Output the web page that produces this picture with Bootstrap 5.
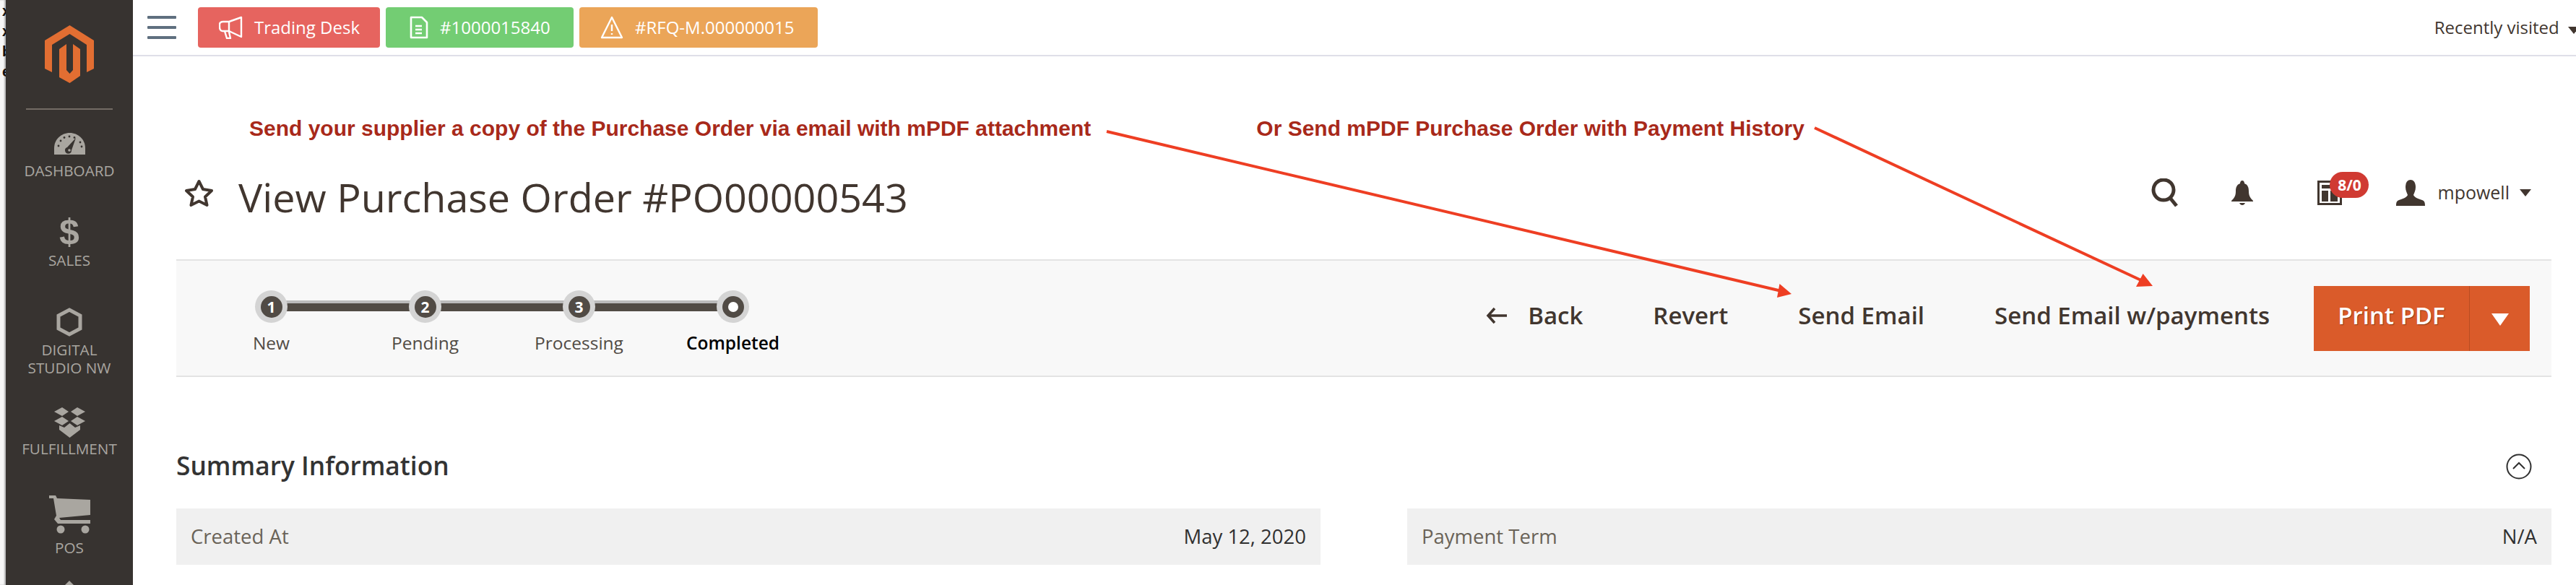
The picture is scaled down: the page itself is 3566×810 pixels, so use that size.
<!DOCTYPE html>
<html lang="en">
<head>
  <meta charset="UTF-8" />
  <title>View Purchase Order #PO00000543</title>
  <link href="https://cdn.jsdelivr.net/npm/bootstrap@5.3.3/dist/css/bootstrap.min.css" rel="stylesheet"/>
  <style>
    html, body {
      height: 810px;
      overflow: hidden;
    }

    body {
      background-color: #fff;
      color: #41362f;
      font-family: "Open Sans", "Liberation Sans", sans-serif;
    }

    .page-wrap {
      position: relative;
      height: 810px;
      overflow: hidden;
    }

    .edge-strip {
      width: 8px;
      padding-left: 3px;
      padding-top: 1px;
      overflow: hidden;
      flex-shrink: 0;
      background-color: #f7f7f7;
      box-shadow: inset -2px 0 2px #b5b5b5;
      font-family: "Liberation Sans", sans-serif;
      font-size: 20px;
      font-weight: 700;
      line-height: 28px;
      color: #111;
    }

    .side-menu {
      width: 176px;
      height: 810px;
      flex-shrink: 0;
      background-color: #373330;
      color: #a9a6a0;
      font-size: 20.700px;
      line-height: 26px;
      text-align: center;
    }

    .side-logo {
      height: 152px;
      margin: 0 28px;
      padding-top: 35px;
      border-bottom: 2px solid #736c65;
    }

    .side-item {
      display: flex;
      flex-direction: column;
      align-items: center;
      white-space: nowrap;
    }

    .side-dash { margin-top: 32px; }
    .side-dash span { margin-top: 9px; }
    .side-sales { margin-top: 49px; }
    .side-sales span:last-child { margin-top: 3px; }
    .side-digital { margin-top: 53px; }
    .side-digital svg { margin-bottom: 5px; }
    .side-digital span:last-child { margin-top: -1px; }
    .side-fulfil { margin-top: 42px; }
    .side-fulfil span { margin-top: 2px; }
    .side-pos { margin-top: 52px; }
    .side-pos span { margin-top: 5px; }
    .side-next { margin-top: 33px; }

    .side-dollar {
      font-family: "Liberation Sans", sans-serif;
      font-size: 50px;
      font-weight: 700;
      line-height: 46px;
    }

    .main-area {
      flex-grow: 1;
      min-width: 0;
    }

    .top-strip {
      height: 78px;
      padding-left: 20px;
      border-bottom: 2px solid #dfdfe8;
      font-size: 24px;
      white-space: nowrap;
    }

    .burger {
      width: 40px;
      height: 32px;
      margin-right: 30px;
      display: flex;
      flex-direction: column;
      justify-content: space-between;
    }

    .burger span {
      height: 4px;
      border-radius: 1px;
      background-color: #5f6f7f;
    }

    .tag-btn {
      height: 56px;
      padding: 0 0 0 29px;
      margin-right: 8px;
      display: flex;
      align-items: center;
      border: 0;
      border-radius: 4px;
      color: #fff;
      font-size: 24px;
    }

    .tag-red { width: 252px; background-color: #e6645f; }
    .tag-green { width: 260px; padding-left: 33px; background-color: #73cd73; }
    .tag-orange { width: 330px; background-color: #eba558; }

    .recent-link {
      margin-left: auto;
      margin-right: -5px;
      color: #41362f;
    }

    .recent-link .tri-down {
      margin-left: 6px;
    }

    .tri-down {
      display: inline-block;
      width: 0;
      height: 0;
      border-left: 8px solid transparent;
      border-right: 8px solid transparent;
      border-top: 10px solid #41362f;
    }

    .content-area {
      padding: 0 34px 0 60px;
    }

    .note-row {
      height: 117px;
      padding: 83px 0 0 101px;
      font-family: "Liberation Sans", sans-serif;
      font-size: 30px;
      font-weight: 700;
      line-height: 34px;
      color: #a8291a;
      white-space: nowrap;
    }

    .note-second {
      margin-left: 229px;
    }

    .title-row {
      height: 100px;
      margin-top: 22px;
      margin-bottom: 42px;
      padding-left: 11px;
      padding-right: 28px;
    }

    .title-text {
      margin: 10px 0 0 34px;
      font-size: 55.700px;
      font-weight: 400;
      line-height: 90px;
      color: #41362f;
    }

    .bell-icon {
      margin-left: 70px;
    }

    .user-name {
      font-size: 25px;
      margin: 0 14px 0 17px;
    }

    .count-wrap {
      position: relative;
      width: 34px;
      height: 34px;
      margin-left: 89px;
      margin-right: 75px;
    }

    .count-pill {
      position: absolute;
      top: -12px;
      left: 17px;
      width: 54px;
      height: 36px;
      border-radius: 18px;
      background-color: #d03a32;
      color: #fff;
      font-size: 21px;
      font-weight: 700;
      line-height: 36px;
      text-align: center;
    }

    .action-bar {
      height: 163px;
      padding: 0 30px 0 25px;
      background-color: #f8f8f8;
      border-top: 2px solid #e3e3e3;
      border-bottom: 2px solid #e3e3e3;
    }

    .step-cell {
      position: relative;
      width: 213px;
      padding-top: 41px;
      text-align: center;
      font-size: 24.500px;
      line-height: 32px;
      color: #514b45;
    }

    .step-cell:not(:last-child)::before {
      content: "";
      position: absolute;
      top: 55px;
      left: 106px;
      width: 213px;
      height: 15px;
      background-color: #514b45;
      border-top: 4px solid #bbb;
    }

    .step-dot {
      position: relative;
      width: 45px;
      height: 45px;
      margin: 0 auto 12px;
      display: flex;
      align-items: center;
      justify-content: center;
      border-radius: 50%;
      background-color: #d4d4d4;
    }

    .step-num {
      position: relative;
      z-index: 1;
      width: 30px;
      height: 30px;
      border-radius: 50%;
      background-color: #514b45;
      color: #fff;
      font-size: 21px;
      font-weight: 700;
      line-height: 30px;
    }

    .step-cell:not(:last-child) .step-dot {
      z-index: 1;
    }

    .step-last {
      width: 30px;
      height: 30px;
      border-radius: 50%;
      border: 8px solid #514b45;
      background-color: #fff;
      position: relative;
      z-index: 1;
    }

    .step-done {
      font-weight: 600;
      color: #000;
    }

    .bar-link {
      margin-right: 97px;
      padding-bottom: 8px;
      font-size: 33px;
      font-weight: 600;
      color: #41362f;
      white-space: nowrap;
    }

    .bar-back {
      display: flex;
      align-items: center;
      gap: 29px;
    }

    .print-group {
      margin-left: -36px;
    }

    .print-main, .print-more {
      height: 90px;
      border: 0;
      border-radius: 0;
      background-color: #da5b2a;
      color: #fff;
      font-size: 33px;
      font-weight: 600;
      text-shadow: 1px 1px 1px #8a3a18;
    }

    .print-main {
      width: 217px;
      padding: 0 0 8px;
      border-right: 2px solid #b94d22;
    }

    .print-more {
      width: 83px;
      padding: 0 0 6px;
    }

    .print-more .tri-down {
      border-left-width: 12px;
      border-right-width: 12px;
      border-top: 17px solid #fff;
      vertical-align: -1px;
    }

    .sum-head {
      height: 48px;
      margin-top: 100px;
      margin-bottom: 34px;
    }

    .sum-title {
      margin: -4px 0 0;
      font-size: 35.300px;
      font-weight: 600;
      line-height: 48px;
      color: #333;
    }

    .sum-toggle {
      margin-right: 27px;
    }

    .info-row {
      --bs-gutter-x: 120px;
    }

    .info-cell {
      height: 78px;
      padding: 0 20px;
      background-color: #f0f0f0;
      font-size: 27.500px;
      color: #6a6358;
    }

    .info-val {
      color: #303030;
    }

    .arrow-layer {
      position: absolute;
      top: 0;
      left: 0;
      pointer-events: none;
    }
  </style>
</head>
<body>

  <div class="page-wrap d-flex">
    <div class="edge-strip">x<br>x<br>b<br>e</div>

    <nav class="side-menu">
      <div class="side-logo">
        <svg width="68" height="80" viewBox="0 0 68 80">
          <path fill="#e26e32" d="M34.500 0 68 21V60L58 65V27L34.500 12 10 27V65L0 60V21Z"/>
          <path fill="#e26e32" d="M20 33 30 26V62L34.500 67 39 62V26L49 33V70L34.500 80 20 72Z"/>
        </svg>
      </div>

      <div class="side-item side-dash">
        <svg width="43" height="30" viewBox="0 0 43 30">
          <path fill="#a9a6a0" d="M0 30V21C0 9 10 0 21.500 0S43 9 43 21V30Z"/>
          <g fill="#373330">
            <circle cx="6" cy="18" r="1.400"/><circle cx="9" cy="11" r="1.400"/><circle cx="14" cy="6.500" r="1.400"/>
            <circle cx="21" cy="5" r="1.400"/><circle cx="28" cy="6.500" r="1.400"/><circle cx="36" cy="13" r="1.400"/><circle cx="38" cy="19" r="1.400"/>
          </g>
          <path fill="#373330" d="M30 7 24 24A4.500 4.500 0 1 1 18 20Z"/>
          <circle cx="21" cy="24" r="1.800" fill="#a9a6a0"/>
        </svg>
        <span>DASHBOARD</span>
      </div>

      <div class="side-item side-sales">
        <span class="side-dollar">$</span>
        <span>SALES</span>
      </div>

      <div class="side-item side-digital">
        <svg width="36" height="40" viewBox="0 0 36 40">
          <path fill="none" stroke="#a9a6a0" stroke-width="5" d="M18 3 33 11V29L18 37 3 29V11Z"/>
        </svg>
        <span>DIGITAL</span>
        <span>STUDIO NW</span>
      </div>

      <div class="side-item side-fulfil">
        <svg width="43" height="42" viewBox="0 0 43 42">
          <g fill="#a9a6a0">
            <path d="M11 0 20 6 11 12 0 6Z"/><path d="M32 0 43 6 32 12 23 6Z"/>
            <path d="M11 13 20 19 11 25 0 19Z"/><path d="M32 13 43 19 32 25 23 19Z"/>
            <path d="M21.500 22 29 28 36 25V31L21.500 42 7 31V25L14 28Z"/>
          </g>
        </svg>
        <span>FULFILLMENT</span>
      </div>

      <div class="side-item side-pos">
        <svg width="57" height="54" viewBox="0 0 57 54">
          <path fill="#a9a6a0" d="M0 0H9L11 4 57 6V27L14 31 16 34H57V39H12L7 33 10 28 6 4H0Z"/>
          <circle cx="16" cy="47" r="5.500" fill="#a9a6a0"/>
          <circle cx="50" cy="47" r="5.500" fill="#a9a6a0"/>
        </svg>
        <span>POS</span>
      </div>

      <div class="side-item side-next">
        <svg width="20" height="10" viewBox="0 0 20 10"><path fill="#a9a6a0" d="M10 0 20 10H0Z"/></svg>
      </div>
    </nav>

    <main class="main-area">
      <div class="top-strip d-flex align-items-center">
        <div class="burger"><span></span><span></span><span></span></div>

        <button type="button" class="btn tag-btn tag-red">
          <svg class="me-3" width="33" height="32" viewBox="0 0 33 32" fill="none" stroke="#fff" stroke-width="2.400" stroke-linejoin="round">
            <path d="M31 2V29L14 21H5C2 21 1 18 1 15V12C1 9 3 8 6 8H14Z"/>
            <path d="M14 8V21M8 21 11 31H16L14 22"/>
          </svg>
          Trading Desk
        </button>
        <button type="button" class="btn tag-btn tag-green">
          <svg class="me-3" width="26" height="32" viewBox="0 0 26 32" fill="none" stroke="#fff" stroke-width="2.600" stroke-linejoin="round">
            <path d="M2 2H17L24 9V30H2Z"/>
            <path d="M8 14H17M8 19H17M8 24H17"/>
          </svg>
          #1000015840
        </button>
        <button type="button" class="btn tag-btn tag-orange">
          <svg class="me-3" width="32" height="32" viewBox="0 0 32 32" fill="none" stroke="#fff" stroke-width="2.400" stroke-linejoin="round">
            <path d="M16 2 30 30H2Z"/>
            <path d="M16 12V21M16 24V26"/>
          </svg>
          #RFQ-M.000000015
        </button>

        <span class="recent-link">Recently visited <span class="tri-down"></span></span>
      </div>

      <div class="content-area">
        <div class="note-row d-flex">
          <span>Send your supplier a copy of the Purchase Order via email with mPDF attachment</span>
          <span class="note-second">Or Send mPDF Purchase Order with Payment History</span>
        </div>

        <div class="title-row d-flex align-items-center">
          <svg width="41" height="39" viewBox="0 0 41 39">
            <path fill="none" stroke="#41362f" stroke-width="4" stroke-linejoin="round" d="M20.500 3 26 14 38 16 29 24.500 31.500 36 20.500 30.500 9.500 36 12 24.500 3 16 15 14Z"/>
          </svg>
          <h1 class="title-text">View Purchase Order #PO00000543</h1>

          <svg class="ms-auto" width="41" height="40" viewBox="0 0 41 40" fill="none" stroke="#41362f" stroke-width="5">
            <circle cx="17" cy="16" r="14"/>
            <path d="M26 27 35 38"/>
          </svg>
          <svg class="bell-icon" width="30" height="34" viewBox="0 0 30 34">
            <path fill="#41362f" d="M15 0C17 0 18 2 18 4 23 6 24 10 24 15 24 21 26 24 30 28V29H0V28C4 24 6 21 6 15 6 10 7 6 12 4 12 2 13 0 15 0Z"/>
            <path fill="#41362f" d="M11 31H19C18 33 17 34 15 34S12 33 11 31Z"/>
          </svg>
          <div class="count-wrap">
            <svg width="34" height="34" viewBox="0 0 34 34">
              <rect x="1.500" y="1.500" width="31" height="31" fill="none" stroke="#41362f" stroke-width="3"/>
              <rect x="6" y="6" width="22" height="5" fill="#41362f"/>
              <rect x="6" y="14" width="9" height="15" fill="#41362f"/>
              <rect x="18" y="14" width="10" height="15" fill="#41362f"/>
            </svg>
            <span class="count-pill">8/0</span>
          </div>
          <svg width="40" height="36" viewBox="0 0 40 36">
            <path fill="#41362f" d="M20 0C25 0 27 5 27 10 27 15 25 18 24 21 25 24 30 26 36 28 39 29 40 31 40 36H0C0 31 1 29 4 28 10 26 15 24 16 21 15 18 13 15 13 10 13 5 15 0 20 0Z"/>
          </svg>
          <span class="user-name">mpowell</span>
          <span class="tri-down"></span>
        </div>

        <div class="action-bar d-flex justify-content-between">
          <div class="d-flex">
            <div class="step-cell"><div class="step-dot"><span class="step-num">1</span></div>New</div>
            <div class="step-cell"><div class="step-dot"><span class="step-num">2</span></div>Pending</div>
            <div class="step-cell"><div class="step-dot"><span class="step-num">3</span></div>Processing</div>
            <div class="step-cell step-done"><div class="step-dot"><span class="step-last"></span></div>Completed</div>
          </div>

          <div class="d-flex align-items-center">
            <span class="bar-link bar-back">
              <svg width="29" height="24" viewBox="0 0 29 24" fill="none" stroke="#41362f" stroke-width="3.500">
                <path d="M12 2 3 12 12 22M3 12H29"/>
              </svg>
              Back
            </span>
            <span class="bar-link">Revert</span>
            <span class="bar-link">Send Email</span>
            <span class="bar-link">Send Email w/payments</span>
            <div class="btn-group print-group">
              <button type="button" class="btn print-main">Print PDF</button>
              <button type="button" class="btn print-more"><span class="tri-down"></span></button>
            </div>
          </div>
        </div>

        <div class="sum-head d-flex align-items-center justify-content-between">
          <h2 class="sum-title">Summary Information</h2>
          <svg class="sum-toggle" width="36" height="36" viewBox="0 0 36 36" fill="none" stroke="#303030" stroke-width="2">
            <circle cx="18" cy="18" r="16.500"/>
            <path d="M10 21 18 13 26 21"/>
          </svg>
        </div>

        <div class="row info-row">
          <div class="col-6">
            <div class="info-cell d-flex align-items-center justify-content-between">
              <span>Created At</span><span class="info-val">May 12, 2020</span>
            </div>
          </div>
          <div class="col-6">
            <div class="info-cell d-flex align-items-center justify-content-between">
              <span>Payment Term</span><span class="info-val">N/A</span>
            </div>
          </div>
        </div>
      </div>
    </main>

    <svg class="arrow-layer" width="3566" height="810" viewBox="0 0 3566 810">
      <path fill="none" stroke="#ee3e23" stroke-width="4" d="M1532 182 2466 403"/>
      <path fill="#ee3e23" d="M2480 407 2463.500 393 2460 412Z"/>
      <path fill="none" stroke="#ee3e23" stroke-width="4" d="M2512 177 2966 389"/>
      <path fill="#ee3e23" d="M2980 396 2966.600 379 2957 397Z"/>
    </svg>
  </div>

  <script src="https://cdn.jsdelivr.net/npm/bootstrap@5.3.3/dist/js/bootstrap.bundle.min.js"></script>
</body>
</html>
